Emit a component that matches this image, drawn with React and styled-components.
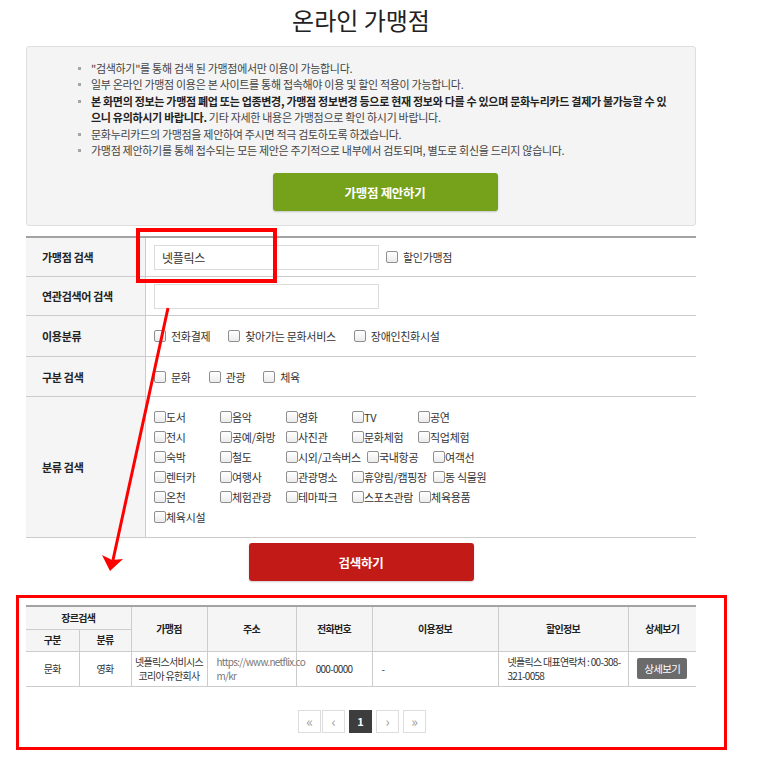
import styled, { createGlobalStyle } from "styled-components";

const GlobalStyle = createGlobalStyle`
    body {
        margin: 0;
        background: #fff;
        font-family: "Noto Sans CJK KR", "Noto Sans", sans-serif;
        color: #333;
    }
    * { box-sizing: border-box; }
`;

const notices = [
    { text: "\"검색하기\"를 통해 검색 된 가맹점에서만 이용이 가능합니다." },
    { text: "일부 온라인 가맹점 이용은 본 사이트를 통해 접속해야 이용 및 할인 적용이 가능합니다." },
    {
        strong: ["본 화면의 정보는 가맹점 폐업 또는 업종변경, 가맹점 정보변경 등으로 현재 정보와 다를 수 있으며 문화누리카드 결제가 불가능할 수 있", "으니 유의하시기 바랍니다."],
        text: " 기타 자세한 내용은 가맹점으로 확인 하시기 바랍니다.",
    },
    { text: "문화누리카드의 가맹점을 제안하여 주시면 적극 검토하도록 하겠습니다." },
    { text: "가맹점 제안하기를 통해 접수되는 모든 제안은 주기적으로 내부에서 검토되며, 별도로 회신을 드리지 않습니다." },
];

const categoryRows = [
    ["도서", "음악", "영화", "TV", "공연"],
    ["전시", "공예/화방", "사진관", "문화체험", "직업체험"],
    ["숙박", "철도", "시외/고속버스", "국내항공", "여객선"],
    ["렌터카", "여행사", "관광명소", "휴양림/캠핑장", "동 식물원"],
    ["온천", "체험관광", "테마파크", "스포츠관람", "체육용품"],
    ["체육시설"],
];

export default function App() {
    return (
        <Page>
            <GlobalStyle />
            <Wrapper>
                <Title>온라인 가맹점</Title>

                <InfoBox>
                    <NoticeList>
                        {notices.map((n, i) => (
                            <li key={i}>
                                {n.strong && (
                                    <strong>
                                        {n.strong[0]}
                                        <br />
                                        {n.strong[1]}
                                    </strong>
                                )}
                                {n.text}
                            </li>
                        ))}
                    </NoticeList>
                    <ButtonRow>
                        <ActionButton $color="#76a11b">가맹점 제안하기</ActionButton>
                    </ButtonRow>
                </InfoBox>

                <SearchTable>
                    <FormRow $h={38}>
                        <Label>가맹점 검색</Label>
                        <Field>
                            <TextBox defaultValue="넷플릭스" />
                            <Check $gap={5} style={{ marginLeft: 7 }}>
                                <Box />
                                할인가맹점
                            </Check>
                        </Field>
                    </FormRow>
                    <FormRow $h={38}>
                        <Label>연관검색어 검색</Label>
                        <Field>
                            <TextBox />
                        </Field>
                    </FormRow>
                    <FormRow $h={40}>
                        <Label>이용분류</Label>
                        <Field $gap={18}>
                            {["전화결제", "찾아가는 문화서비스", "장애인친화시설"].map((t) => (
                                <Check key={t} $gap={5}>
                                    <Box />
                                    {t}
                                </Check>
                            ))}
                        </Field>
                    </FormRow>
                    <FormRow $h={39}>
                        <Label>구분 검색</Label>
                        <Field $gap={18}>
                            {["문화", "관광", "체육"].map((t) => (
                                <Check key={t} $gap={5}>
                                    <Box />
                                    {t}
                                </Check>
                            ))}
                        </Field>
                    </FormRow>
                    <FormRow $h={139}>
                        <Label>분류 검색</Label>
                        <CategoryGrid>
                            {categoryRows.map((row, i) => (
                                <CategoryRow key={i}>
                                    {row.map((t) => (
                                        <CategoryItem key={t}>
                                            <Box />
                                            {t}
                                        </CategoryItem>
                                    ))}
                                </CategoryRow>
                            ))}
                        </CategoryGrid>
                    </FormRow>
                </SearchTable>

                <SearchRow>
                    <ActionButton $color="#c21a16">검색하기</ActionButton>
                </SearchRow>

                <ResultTable>
                    <colgroup>
                        <col style={{ width: 53 }} />
                        <col style={{ width: 52 }} />
                        <col style={{ width: 76 }} />
                        <col style={{ width: 89 }} />
                        <col style={{ width: 76 }} />
                        <col style={{ width: 126 }} />
                        <col style={{ width: 130 }} />
                        <col style={{ width: 68 }} />
                    </colgroup>
                    <thead>
                        <tr style={{ height: 23 }}>
                            <th colSpan={2}>장르검색</th>
                            <th rowSpan={2}>가맹점</th>
                            <th rowSpan={2}>주소</th>
                            <th rowSpan={2}>전화번호</th>
                            <th rowSpan={2}>이용정보</th>
                            <th rowSpan={2}>할인정보</th>
                            <th rowSpan={2}>상세보기</th>
                        </tr>
                        <tr style={{ height: 22 }}>
                            <th>구분</th>
                            <th>분류</th>
                        </tr>
                    </thead>
                    <tbody>
                        <tr>
                            <td>문화</td>
                            <td>영화</td>
                            <td>
                                넷플릭스서비시스
                                <br />
                                코리아 유한회사
                            </td>
                            <Cell $left $muted>
                                https://www.netflix.co
                                <br />
                                m/kr
                            </Cell>
                            <td>000-0000</td>
                            <Cell $left>-</Cell>
                            <Cell $left>
                                넷플릭스 대표연락처 : 00-308-
                                <br />
                                321-0058
                            </Cell>
                            <td>
                                <DetailButton>상세보기</DetailButton>
                            </td>
                        </tr>
                    </tbody>
                </ResultTable>

                <Pager>
                    <PageBtn>«</PageBtn>
                    <PageBtn>‹</PageBtn>
                    <PageBtn $active>1</PageBtn>
                    <PageBtn>›</PageBtn>
                    <PageBtn>»</PageBtn>
                </Pager>
            </Wrapper>

            {/* annotation marks drawn over the page */}
            <Mark $left={136} $top={228} $w={141} $h={55} $stroke={4} />
            <Mark $left={16} $top={595} $w={711} $h={155} $stroke={3} />
            <ArrowLayer width="773" height="762" viewBox="0 0 773 762">
                <line x1="168" y1="308" x2="113" y2="560" stroke="#f00" strokeWidth="3" />
                <polygon points="110,571 102,555 112,560 123,559" fill="#f00" />
            </ArrowLayer>
        </Page>
    );
}

const Page = styled.div`
    position: relative;
    width: 773px;
    min-height: 762px;
`;

const Wrapper = styled.div`
    width: 670px;
    margin-left: 26px;
    padding-bottom: 20px;
`;

const Title = styled.h2`
    margin: 0 0 6px;
    text-align: center;
    font-size: 24px;
    font-weight: 400;
    line-height: 40px;
    color: #222;
`;

const InfoBox = styled.div`
    background: #f4f4f4;
    border: 1px solid #dedede;
    border-radius: 3px;
    padding: 13px 16px 14px 64px;
`;

const NoticeList = styled.ul`
    list-style: none;
    margin: 0;
    padding: 0;

    li {
        position: relative;
        font-size: 11px;
        line-height: 16.4px;
        letter-spacing: -0.3px;
        color: #444;
        white-space: nowrap;
    }

    li::before {
        content: "";
        position: absolute;
        left: -13px;
        top: 7px;
        width: 3px;
        height: 3px;
        background: #a5a5a5;
    }

    strong {
        color: #222;
        font-weight: 700;
    }
`;

const ButtonRow = styled.div`
    display: flex;
    justify-content: center;
    margin-top: 15px;
`;

const ActionButton = styled.button`
    width: 225px;
    height: 38px;
    border: none;
    border-radius: 3px;
    background: ${(p) => p.$color};
    color: #fff;
    font-family: inherit;
    font-size: 12.5px;
    font-weight: 700;
    letter-spacing: -0.3px;
    box-shadow: 0 1px 2px rgba(0, 0, 0, 0.2);
`;

const SearchTable = styled.div`
    margin-top: 10px;
    border-top: 2px solid #a3a3a3;
`;

const FormRow = styled.div`
    display: grid;
    grid-template-columns: 120px 1fr;
    min-height: ${(p) => p.$h + 1}px;
    border-bottom: 1px solid #cccccc;
`;

const Label = styled.div`
    display: flex;
    align-items: center;
    padding-left: 16px;
    background: #f5f5f5;
    border-right: 1px solid #cccccc;
    font-size: 11px;
    font-weight: 700;
    letter-spacing: -0.3px;
    color: #222;
`;

const Field = styled.div`
    display: flex;
    align-items: center;
    gap: ${(p) => p.$gap || 0}px;
    padding-left: 8px;
`;

const TextBox = styled.input`
    width: 225px;
    height: 25px;
    border: 1px solid #dcdcdc;
    padding: 0 7px;
    font-family: inherit;
    font-size: 12px;
    letter-spacing: -0.3px;
    color: #333;
    outline: none;
`;

const Check = styled.label`
    display: inline-flex;
    align-items: center;
    gap: ${(p) => p.$gap}px;
    font-size: 11px;
    letter-spacing: -0.3px;
    color: #333;
    line-height: 14px;
`;

const Box = styled.span`
    display: inline-block;
    flex: none;
    width: 12px;
    height: 12px;
    border: 1px solid #8f8f8f;
    border-radius: 2px;
    background: linear-gradient(#ffffff, #ececec);
`;

const CategoryGrid = styled.div`
    padding: 10px 0 10px 8px;
`;

const CategoryRow = styled.div`
    display: flex;
    height: 20px;
    align-items: center;
`;

const CategoryItem = styled.label`
    display: inline-flex;
    align-items: center;
    min-width: 66px;
    padding-right: 6px;
    font-size: 11px;
    letter-spacing: -0.3px;
    color: #333;
    line-height: 14px;
    white-space: nowrap;
`;

const SearchRow = styled.div`
    display: flex;
    justify-content: center;
    margin-top: 5px;
`;

const ResultTable = styled.table`
    width: 670px;
    margin-top: 24px;
    border-collapse: collapse;
    table-layout: fixed;
    border-top: 2px solid #a3a3a3;

    th,
    td {
        border: 1px solid #cccccc;
        text-align: center;
        font-size: 10px;
        letter-spacing: -0.7px;
        color: #333;
        line-height: 14px;
        padding: 0;
        white-space: nowrap;
    }

    th:first-child,
    td:first-child {
        border-left: none;
    }

    th:last-child,
    td:last-child {
        border-right: none;
    }

    thead tr:nth-child(2) th:last-child {
        border-right: 1px solid #cccccc;
    }

    th {
        background: #f5f5f5;
        font-weight: 700;
        color: #222;
    }

    tbody tr {
        height: 35px;
    }
`;

const Cell = styled.td`
    && {
        text-align: ${(p) => (p.$left ? "left" : "center")};
        color: ${(p) => (p.$muted ? "#777" : "#333")};
        padding-left: ${(p) => (p.$left ? "9px" : "0")};
    }
`;

const DetailButton = styled.span`
    display: inline-flex;
    align-items: center;
    justify-content: center;
    width: 50px;
    height: 21px;
    background: #6b6b6b;
    border-radius: 2px;
    color: #fff;
    font-size: 10.5px;
    letter-spacing: -0.6px;
`;

const Pager = styled.div`
    display: flex;
    justify-content: center;
    gap: 4px;
    margin-top: 23px;
    padding-left: 2px;

    & > :first-child {
        margin-right: -3px;
    }
`;

const PageBtn = styled.span`
    display: inline-flex;
    align-items: center;
    justify-content: center;
    width: 23px;
    height: 23px;
    border: ${(p) => (p.$active ? "none" : "1px solid #dddddd")};
    background: ${(p) => (p.$active ? "#3d3d3d" : "#fff")};
    color: ${(p) => (p.$active ? "#fff" : "#999")};
    font-size: ${(p) => (p.$active ? "11px" : "14px")};
    font-weight: ${(p) => (p.$active ? 700 : 400)};
    line-height: 1;
`;

const Mark = styled.div`
    position: absolute;
    left: ${(p) => p.$left}px;
    top: ${(p) => p.$top}px;
    width: ${(p) => p.$w}px;
    height: ${(p) => p.$h}px;
    border: ${(p) => p.$stroke}px solid #ff0000;
    pointer-events: none;
`;

const ArrowLayer = styled.svg`
    position: absolute;
    left: 0;
    top: 0;
    pointer-events: none;
`;
